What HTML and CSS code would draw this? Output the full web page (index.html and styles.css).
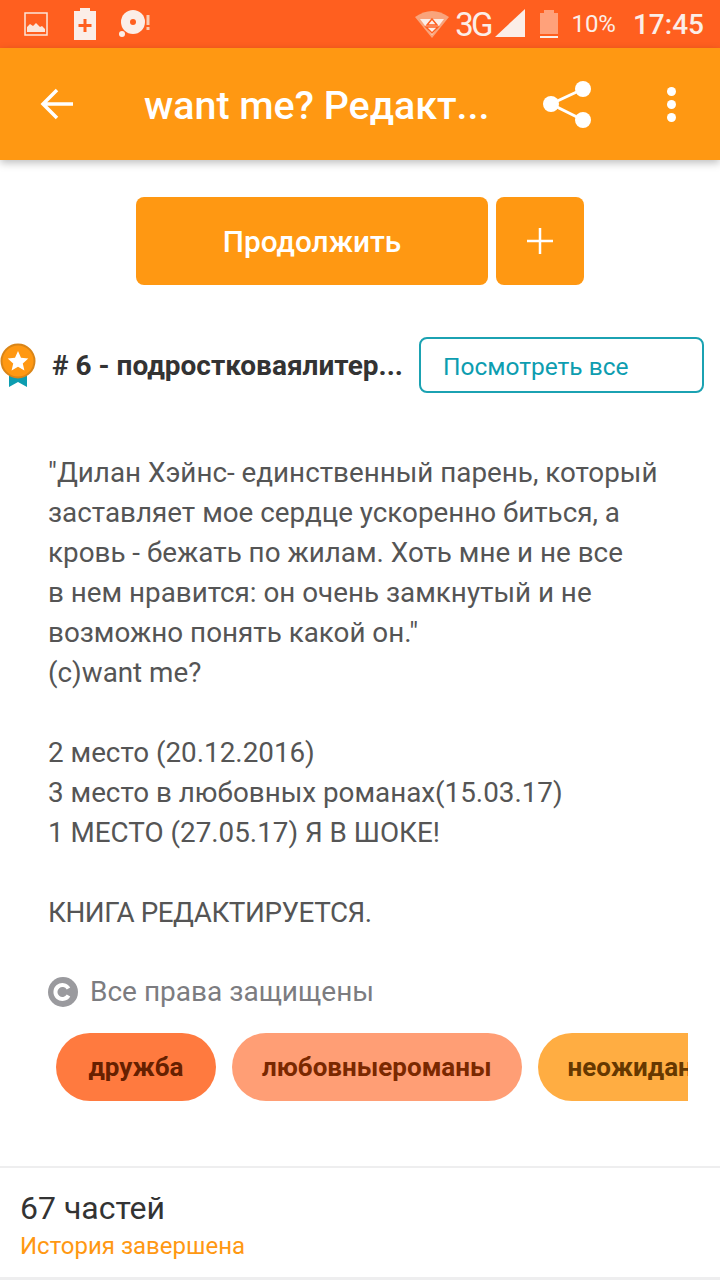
FILE: index.html
```html
<!DOCTYPE html>
<html lang="en">

<head>
    <meta charset="UTF-8">
    <meta name="viewport" content="width=device-width, initial-scale=1.0">
    <title>want me?</title>
    <link rel="stylesheet" href="styles.css">
</head>

<body>
    <!-- Status bar -->
    <div class="status-bar">
        <div class="status-left">
            <svg class="status-icon" width="24" height="24" viewBox="0 0 24 24">
                <rect x="1" y="1" width="22" height="22" fill="none" stroke="#fbe6da" stroke-width="1.5"/>
                <path d="M3 20v-5l3-3 3 2 3-3 4 4 2-1 3 3v3z" fill="#fbe6da"/>
            </svg>
            <svg class="status-icon" width="22" height="32" viewBox="0 0 22 32">
                <path d="M6 0h10v3h6v29H0V3h6z" fill="#fbeee8"/>
                <path d="M9.500 11h3v5h5v3h-5v5h-3v-5h-5v-3h5z" fill="#ff5f1f"/>
            </svg>
            <svg class="status-icon" width="32" height="28" viewBox="0 0 32 28">
                <circle cx="14" cy="12" r="12" fill="#fbeee8"/>
                <circle cx="14" cy="12" r="3" fill="#ff5f1f"/>
                <circle cx="3" cy="24" r="3" fill="#fbeee8"/>
                <rect x="27.500" y="5" width="3" height="10" fill="#f9cdb4"/>
                <rect x="27.500" y="17" width="3" height="3" fill="#f9cdb4"/>
            </svg>
        </div>
        <div class="status-right">
            <svg width="34" height="30" viewBox="0 0 34 30">
                <path d="M0 8Q17-4 34 8L17 29z" fill="#f9a47c"/>
                <path d="M5 10h24L17 26z" fill="#fbeee8"/>
                <path d="M17 10l5 6H12zM11 18h12l-6 6z" fill="none" stroke="#ff5f1f" stroke-width="1.500"/>
            </svg>
            <span class="network">3G</span>
            <svg class="signal" width="30" height="30" viewBox="0 0 30 30">
                <path d="M30 0v28H0z" fill="#fbeee8"/>
            </svg>
            <svg class="battery" width="20" height="30" viewBox="0 0 20 30">
                <path d="M5 1h10v3h4v21H1V4h4z" fill="#ffa17a"/>
                <rect x="1" y="27" width="18" height="2" fill="#fbeee8"/>
            </svg>
            <span class="battery-text">10%</span>
            <span class="clock">17:45</span>
        </div>
    </div>

    <!-- Toolbar -->
    <header class="toolbar">
        <svg class="back-icon" width="34" height="32" viewBox="0 0 34 32">
            <path d="M33 16H3M17 2L3 16l14 14" fill="none" stroke="#fff" stroke-width="3.500"/>
        </svg>
        <h1 class="toolbar-title">want me? Редакт...</h1>
        <svg class="share-icon" width="48" height="48" viewBox="0 0 48 48">
            <path d="M40 9L8 24l32 16" fill="none" stroke="#fff" stroke-width="3"/>
            <circle cx="40" cy="9" r="8" fill="#fff"/>
            <circle cx="8" cy="24" r="8" fill="#fff"/>
            <circle cx="40" cy="40" r="8" fill="#fff"/>
        </svg>
        <div class="more-icon">
            <span></span>
            <span></span>
            <span></span>
        </div>
    </header>

    <main>
        <div class="actions">
            <button class="btn-continue">Продолжить</button>
            <button class="btn-add">
                <svg width="26" height="26" viewBox="0 0 26 26">
                    <path d="M13 0v26M0 13h26" stroke="#fff" stroke-width="2.500"/>
                </svg>
            </button>
        </div>

        <div class="rank-row">
            <svg class="medal" width="36" height="44" viewBox="0 0 36 44">
                <path d="M9 26h18v18l-9-5-9 5z" fill="#0d9db0"/>
                <circle cx="18" cy="18" r="16.500" fill="#ff9812" stroke="#d98518" stroke-width="2"/>
                <path d="M18 8l3 6.800 7.300.7-5.500 4.900 1.600 7.200-6.400-3.800-6.400 3.800 1.600-7.200-5.500-4.900 7.300-.7z" fill="#fff"/>
            </svg>
            <span class="rank-text"># 6 - подростковаялитер...</span>
            <button class="btn-view">Посмотреть все</button>
        </div>

        <p class="description">"Дилан Хэйнс- единственный парень, который
заставляет мое сердце ускоренно биться, а
кровь - бежать по жилам. Хоть мне и не все
в нем нравится: он очень замкнутый и не
возможно понять какой он."
(с)want me?

2 место (20.12.2016)
3 место в любовных романах(15.03.17)
1 МЕСТО (27.05.17) Я В ШОКЕ!

<span class="caps-line">КНИГА РЕДАКТИРУЕТСЯ.</span></p>

        <div class="copyright">
            <svg width="30" height="30" viewBox="0 0 30 30">
                <circle cx="15" cy="15" r="15" fill="#9a9a9e"/>
                <path d="M20.500 11.500a7 7 0 1 0 0 7" fill="none" stroke="#fff" stroke-width="4"/>
            </svg>
            <span>Все права защищены</span>
        </div>

        <div class="tags">
            <span class="tag tag-one">дружба</span>
            <span class="tag tag-two">любовныероманы</span>
            <span class="tag tag-three">неожиданный</span>
        </div>
    </main>

    <footer class="parts">
        <div class="parts-count">67 частей</div>
        <div class="parts-status">История завершена</div>
    </footer>
</body>

</html>
```
FILE: styles.css
```css
* {
    box-sizing: border-box;
}

body {
    font-family: 'Roboto', sans-serif;
    margin: 0;
    padding: 0;
    width: 720px;
    height: 1280px;
    overflow: hidden;
    background-color: #fff;
}

.status-bar {
    height: 48px;
    background-color: #ff5f1f;
    display: flex;
    justify-content: space-between;
    align-items: center;
    padding: 0 16px 0 24px;
}

.status-left {
    display: flex;
    align-items: center;
    gap: 26px;
}

.status-left svg:last-child {
    margin-left: -3px;
}

.status-right {
    display: flex;
    align-items: center;
    color: #fbeee8;
}

.network {
    font-size: 33px;
    letter-spacing: -3px;
    margin-left: 6px;
}

.signal {
    margin-left: 5px;
}

.battery {
    margin-left: 14px;
}

.battery-text {
    font-size: 24px;
    margin-left: 12px;
}

.clock {
    font-size: 28px;
    font-weight: 500;
    margin-left: 17px;
}

.toolbar {
    height: 112px;
    background-color: #ff9812;
    box-shadow: 0 3px 8px rgba(0, 0, 0, 0.25);
    display: flex;
    align-items: center;
    padding-left: 40px;
    color: white;
}

.toolbar-title {
    width: 348px;
    margin: 2px 0 0 70px;
    font-size: 39.4px;
    font-weight: 500;
    white-space: nowrap;
}

.share-icon {
    margin-left: 51px;
}

.more-icon {
    margin-left: 76px;
    display: flex;
    flex-direction: column;
    gap: 4px;
}

.more-icon span {
    width: 9px;
    height: 9px;
    border-radius: 50%;
    background-color: white;
}

.actions {
    display: flex;
    justify-content: center;
    gap: 8px;
    margin-top: 37px;
}

.actions button {
    height: 88px;
    background-color: #ff9812;
    color: white;
    border: none;
    border-radius: 8px;
    font-family: inherit;
}

.btn-continue {
    width: 352px;
    font-size: 29.8px;
    font-weight: 500;
}

.btn-add {
    width: 88px;
    display: flex;
    align-items: center;
    justify-content: center;
}

.rank-row {
    display: flex;
    align-items: center;
    margin-top: 52px;
    height: 56px;
}

.medal {
    flex-shrink: 0;
}

.rank-text {
    width: 367px;
    padding-left: 16px;
    font-size: 28px;
    font-weight: 700;
    color: #333;
    white-space: nowrap;
}

.btn-view {
    flex-shrink: 0;
    width: 285px;
    height: 56px;
    margin-left: 16px;
    padding: 2px 0 0 22px;
    background: white;
    border: 2px solid #1ba2b2;
    border-radius: 8px;
    color: #0d9db0;
    font-family: inherit;
    font-size: 24.5px;
    text-align: left;
}

.description {
    margin: 60px 0 0;
    padding-left: 48px;
    font-size: 27.8px;
    line-height: 40px;
    color: #555;
    white-space: pre-line;
}

.caps-line {
    letter-spacing: -0.45px;
}

.copyright {
    display: flex;
    align-items: center;
    gap: 12px;
    margin: 42px 0 0 48px;
    font-size: 28px;
    color: #7c7c80;
}

.tags {
    display: flex;
    gap: 16px;
    width: 632px;
    margin: 25px 0 0 56px;
    overflow: hidden;
}

.tag {
    flex-shrink: 0;
    height: 68px;
    padding: 0 30px;
    border-radius: 34px;
    display: flex;
    align-items: center;
    font-size: 26px;
    font-weight: 700;
    white-space: nowrap;
}

.tag-one {
    background-color: #ff7a3f;
    color: #662000;
    width: 160px;
    justify-content: center;
}

.tag-two {
    background-color: #ff9e75;
    color: #7a2800;
}

.tag-three {
    background-color: #ffad42;
    color: #663800;
}

.parts {
    margin-top: 65px;
    height: 114px;
    border-top: 2px solid #eeeeef;
    border-bottom: 3px solid #eeeeef;
    padding: 20px 20px 0;
}

.parts-count {
    font-size: 32px;
    line-height: 40px;
    color: #333;
}

.parts-status {
    font-size: 24px;
    line-height: 36px;
    color: #ff9812;
}
```
